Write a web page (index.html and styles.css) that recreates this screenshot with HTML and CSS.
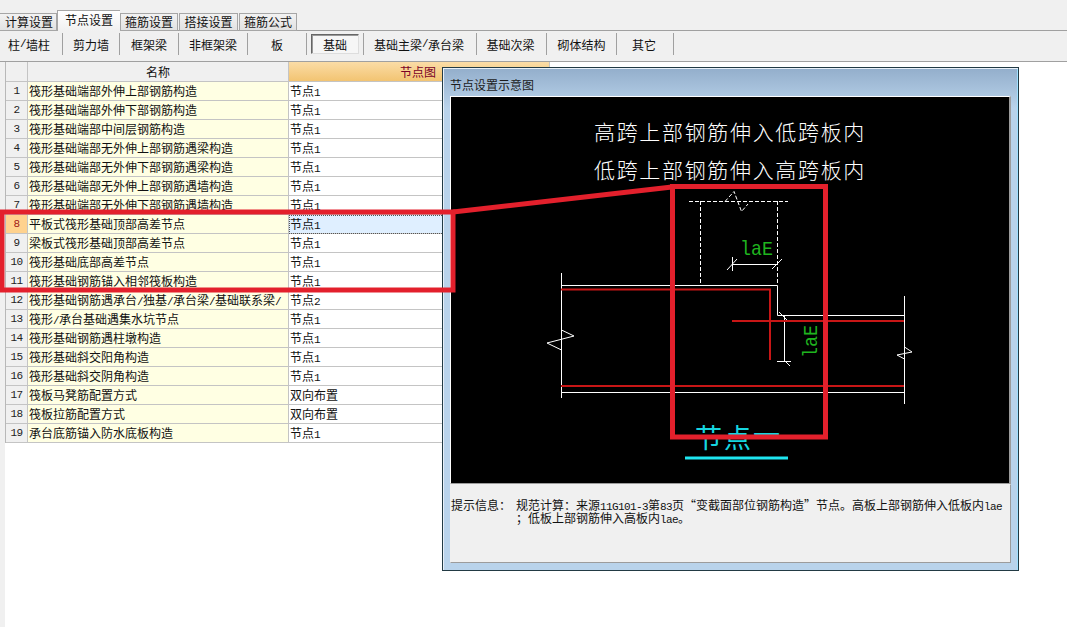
FILE: index.html
```html
<!DOCTYPE html>
<html lang="zh-CN">
<head>
<meta charset="utf-8">
<title>节点设置</title>
<link rel="stylesheet" href="styles.css">
</head>
<body>
<div class="app">
  <div class="tabs">
    <div class="tab">计算设置</div>
    <div class="tab active">节点设置</div>
    <div class="tab">箍筋设置</div>
    <div class="tab">搭接设置</div>
    <div class="tab">箍筋公式</div>
  </div>
  <div class="toolbar">
    <div class="tool">柱<span class="n">/</span>墙柱</div>
    <div class="tool">剪力墙</div>
    <div class="tool">框架梁</div>
    <div class="tool">非框架梁</div>
    <div class="tool">板</div>
    <div class="tool pressed"><span>基础</span></div>
    <div class="tool">基础主梁<span class="n">/</span>承台梁</div>
    <div class="tool">基础次梁</div>
    <div class="tool">砌体结构</div>
    <div class="tool">其它</div>
  </div>
  <div class="content">
    <table class="grid">
      <thead>
        <tr><th class="num"></th><th class="name">名称</th><th class="value">节点图</th></tr>
      </thead>
      <tbody>
        <tr><td class="num">1</td><td class="name">筏形基础端部外伸上部钢筋构造</td><td class="value">节点<span class="n">1</span></td></tr>
        <tr><td class="num">2</td><td class="name">筏形基础端部外伸下部钢筋构造</td><td class="value">节点<span class="n">1</span></td></tr>
        <tr><td class="num">3</td><td class="name">筏形基础端部中间层钢筋构造</td><td class="value">节点<span class="n">1</span></td></tr>
        <tr><td class="num">4</td><td class="name">筏形基础端部无外伸上部钢筋遇梁构造</td><td class="value">节点<span class="n">1</span></td></tr>
        <tr><td class="num">5</td><td class="name">筏形基础端部无外伸下部钢筋遇梁构造</td><td class="value">节点<span class="n">1</span></td></tr>
        <tr><td class="num">6</td><td class="name">筏形基础端部无外伸上部钢筋遇墙构造</td><td class="value">节点<span class="n">1</span></td></tr>
        <tr><td class="num">7</td><td class="name">筏形基础端部无外伸下部钢筋遇墙构造</td><td class="value">节点<span class="n">1</span></td></tr>
        <tr class="selected"><td class="num">8</td><td class="name">平板式筏形基础顶部高差节点</td><td class="value">节点<span class="n">1</span></td></tr>
        <tr><td class="num">9</td><td class="name">梁板式筏形基础顶部高差节点</td><td class="value">节点<span class="n">1</span></td></tr>
        <tr><td class="num">10</td><td class="name">筏形基础底部高差节点</td><td class="value">节点<span class="n">1</span></td></tr>
        <tr><td class="num">11</td><td class="name">筏形基础钢筋锚入相邻筏板构造</td><td class="value">节点<span class="n">1</span></td></tr>
        <tr><td class="num">12</td><td class="name">筏形基础钢筋遇承台<span class="n">/</span>独基<span class="n">/</span>承台梁<span class="n">/</span>基础联系梁<span class="n">/</span></td><td class="value">节点<span class="n">2</span></td></tr>
        <tr><td class="num">13</td><td class="name">筏形<span class="n">/</span>承台基础遇集水坑节点</td><td class="value">节点<span class="n">1</span></td></tr>
        <tr><td class="num">14</td><td class="name">筏形基础钢筋遇柱墩构造</td><td class="value">节点<span class="n">1</span></td></tr>
        <tr><td class="num">15</td><td class="name">筏形基础斜交阳角构造</td><td class="value">节点<span class="n">1</span></td></tr>
        <tr><td class="num">16</td><td class="name">筏形基础斜交阴角构造</td><td class="value">节点<span class="n">1</span></td></tr>
        <tr><td class="num">17</td><td class="name">筏板马凳筋配置方式</td><td class="value">双向布置</td></tr>
        <tr><td class="num">18</td><td class="name">筏板拉筋配置方式</td><td class="value">双向布置</td></tr>
        <tr><td class="num">19</td><td class="name">承台底筋锚入防水底板构造</td><td class="value">节点<span class="n">1</span></td></tr>
      </tbody>
    </table>
  </div>

  <div class="dialog">
    <div class="dialog-title">节点设置示意图</div>
    <div class="canvas">
      <svg class="drawing" viewBox="451 96 560 387" width="560" height="387" xmlns="http://www.w3.org/2000/svg">
        <text class="head" x="594" y="139">高跨上部钢筋伸入低跨板内</text>
        <text class="head" x="594" y="177">低跨上部钢筋伸入高跨板内</text>
        <g class="dash">
          <path d="M689 200.5H788"/>
          <path d="M700.5 200V284"/>
          <path d="M777.5 200V284"/>
        </g>
        <path class="dash thin" d="M725 200.5L734 190.5L741.5 210.5L748 203"/>
        <g class="wire">
          <path d="M561 284.5H777.5V314.5H904"/>
          <path d="M561.5 272V397"/>
          <path d="M904.5 295V403"/>
          <path d="M561 391.5H904"/>
          <path d="M732 263.5H777"/>
          <path d="M732.5 256V270"/>
          <path d="M727 269L737 258"/>
          <path d="M772 268L782 258"/>
          <path d="M784.5 314V361"/>
          <path d="M779 311L789 321"/>
          <path d="M777 360.5H791"/>
          <path d="M785 360L790 365"/>
          <path d="M561.5 329L574 335L547 342L561.5 349"/>
          <path d="M904.5 346L912 351L897 354L904.5 358"/>
        </g>
        <g class="rebar">
          <path d="M561 288.5H770V359"/>
          <path d="M732 320H904"/>
          <path d="M561 385H904"/>
        </g>
        <text class="dim" x="740" y="254" textLength="33" lengthAdjust="spacingAndGlyphs">laE</text>
        <text class="dim" transform="translate(817 357) rotate(-90)" textLength="33" lengthAdjust="spacingAndGlyphs">laE</text>
        <text class="node" x="695" y="447">节点<tspan dy="-3">一</tspan></text>
        <path class="node-line" d="M685 457H788"/>
      </svg>
    </div>
    <div class="info">
      <div class="info-label">提示信息&#xFF1A;</div>
      <div class="info-text">规范计算&#xFF1A;来源<span class="n">11G101-3</span>第<span class="n">83</span>页<span class="quote">“</span>变截面部位钢筋构造<span class="quote">”</span>节点。高板上部钢筋伸入低板内<span class="n">lae</span><br>&#xFF1B;低板上部钢筋伸入高板内<span class="n">lae</span>。</div>
    </div>
  </div>

  <svg class="annotation" width="1067" height="627" viewBox="0 0 1067 627" xmlns="http://www.w3.org/2000/svg">
    <rect x="2" y="212" width="451" height="78"/>
    <path d="M453 212L672 187"/>
    <rect x="672.5" y="186.5" width="153" height="250.5"/>
  </svg>
</div>
</body>
</html>
```
FILE: styles.css
```css
* { box-sizing: border-box; }
html, body { margin: 0; padding: 0; }
body {
  background: #fff;
  color: #111;
  font-family: "Noto Sans CJK SC", "Liberation Sans", sans-serif;
  font-size: 12px;
  text-spacing-trim: space-all;
  font-kerning: none;
}
.n {
  font-family: "Liberation Mono", monospace;
  font-size: 11px;
  letter-spacing: -0.6px;
  line-height: 0;
}
.app {
  position: relative;
  width: 1067px;
  height: 627px;
  overflow: hidden;
  display: flex;
  flex-direction: column;
}
.tabs {
  flex: none;
  height: 31px;
  padding-top: 10px;
  display: flex;
  align-items: flex-end;
  background: #f0f0f0;
  border-bottom: 1px solid #a0a0a0;
}
.tab {
  width: 58px;
  height: 18px;
  margin-bottom: -1px;
  margin-right: 1px;
  line-height: 16px;
  text-align: center;
  background: linear-gradient(#f2f2f2, #e2e2e2);
  border: 1px solid #a6a6a6;
  border-left: 0;
}
.tab.active {
  width: 63px;
  height: 21px;
  line-height: 17px;
  margin-right: 0;
  background: linear-gradient(#fff, #f0f0f0);
  border: 1px solid #a6a6a6;
  border-bottom: 0;
  border-right: 0;
}
.tab:first-child { width: 57px; margin-right: 0; padding-left: 2px; }
.tab:nth-child(3) { border-left: 1px solid #a6a6a6; margin-right: 0; }
.tab:nth-child(4) { margin-left: 1px; border-left: 1px solid #a6a6a6; width: 59px; }
.tab:nth-child(5) { border-left: 1px solid #a6a6a6; }
.toolbar {
  flex: none;
  height: 31px;
  padding-bottom: 4px;
  display: flex;
  align-items: center;
  background: #f0f0f0;
  border-bottom: 1px solid #a0a0a0;
}
.tool {
  width: 57px;
  height: 22px;
  display: flex;
  align-items: center;
  justify-content: center;
  border-right: 1px solid #a0a0a0;
}
.tool:nth-child(1) { width: 63px; padding-right: 4px; }
.tool:nth-child(3) { width: 59px; }
.tool:nth-child(4) { width: 69px; }
.tool:nth-child(5) { width: 59px; }
.tool:nth-child(6) { width: 57px; padding: 0 4px; }
.tool:nth-child(7) { width: 113px; padding-right: 2px; }
.tool:nth-child(8) { width: 70px; padding-right: 2px; }
.tool:nth-child(9) { width: 70px; }
.tool:nth-child(10) { width: 57px; padding-right: 2px; }
.tool.pressed span {
  display: block;
  width: 48px;
  height: 20px;
  line-height: 19px;
  text-align: center;
  background: #f6f6f6;
  border: 1px solid;
  border-color: #666 #ddd #ddd #666;
  box-shadow: inset 1px 1px 0 #999;
}
.content {
  flex: 1;
  position: relative;
  background: #fff;
  border-left: 5px solid #f0f0f0;
}
.grid {
  table-layout: fixed;
  border-collapse: separate;
  border-spacing: 0;
  width: 545px;
  border-left: 1px solid #b8b8b8;
}
.grid th, .grid td {
  height: 19px;
  padding: 0;
  font-weight: 400;
  white-space: nowrap;
  overflow: hidden;
  line-height: 18px;
  border-right: 1px solid #c4c4c4;
  border-bottom: 1px solid #c4c4c4;
}
.grid th { height: 20px; }
.grid .num {
  width: 22px;
  text-align: center;
  background: #f0f0f0;
  font-family: "Liberation Mono", monospace;
  font-size: 11px;
  letter-spacing: -0.6px;
  color: #222;
}
.grid .name { width: 261px; }
.grid td.name { background: #ffffe3; padding-left: 1px; }
.grid td.value { padding-left: 1px; background: #fff; }
.grid th.name { background: #f0f0f0; }
.grid th.value {
  width: 261px;
  padding-right: 2px;
  color: #7a0026;
  background: linear-gradient(#fbdca6, #f2c472);
}
.selected td.num { background: #ffd28e; color: #a01818; }
.selected td.value {
  background: #dfefff;
  outline: 1px dotted #555;
  outline-offset: -1px;
}

.dialog {
  position: absolute;
  left: 442px;
  top: 67px;
  width: 577px;
  height: 504px;
  padding: 0 7px 7px 7px;
  display: flex;
  flex-direction: column;
  background: linear-gradient(#93aecb, #b9d3eb 8%, #b9d3eb);
  border: 1px solid #223a44;
  box-shadow: inset 1px 1px 0 #e8f0f8, inset -1px 0 0 #9fe0ff;
}
.dialog-title {
  flex: none;
  height: 28px;
  padding-top: 9px;
  line-height: 16px;
  color: #1c1c1c;
}
.canvas {
  flex: none;
  height: 388px;
  background: #000;
  border: 1px solid;
  border-color: #fff #9c9c9c #9c9c9c #fff;
  border-right-width: 2px;
  overflow: hidden;
}
.drawing { display: block; }
.head {
  fill: #fff;
  font-size: 21px;
  font-weight: 300;
  letter-spacing: 1.67px;
}
.dash {
  fill: none;
  stroke: #fff;
  stroke-width: 1;
  stroke-dasharray: 4 2;
}
.wire {
  fill: none;
  stroke: #fff;
  stroke-width: 1;
}
.rebar {
  fill: none;
  stroke: #c81616;
  stroke-width: 2;
}
.dim {
  fill: #1fb41f;
  font-family: "Liberation Mono", monospace;
  font-size: 21px;
}
.node {
  fill: #16d6e0;
  font-size: 27px;
  letter-spacing: 2px;
}
.node-line {
  stroke: #1ee6f0;
  stroke-width: 3;
  fill: none;
}
.info {
  flex: 1;
  display: flex;
  padding: 13px 0 0 0;
  gap: 10px;
  background: #f0f0f0;
  border: 1px solid;
  border-color: #f0f0f0 #9c9c9c #9c9c9c #f0f0f0;
  line-height: 13px;
}
.info-label { flex: none; width: 55px; white-space: nowrap; }
.info-text { flex: 1; white-space: nowrap; }
.quote {
  display: inline-block;
  width: 12px;
  text-align: center;
}
.annotation {
  position: absolute;
  left: 0;
  top: 0;
  pointer-events: none;
}
.annotation rect, .annotation path {
  fill: none;
  stroke: #e3202c;
  stroke-width: 5;
}
```
